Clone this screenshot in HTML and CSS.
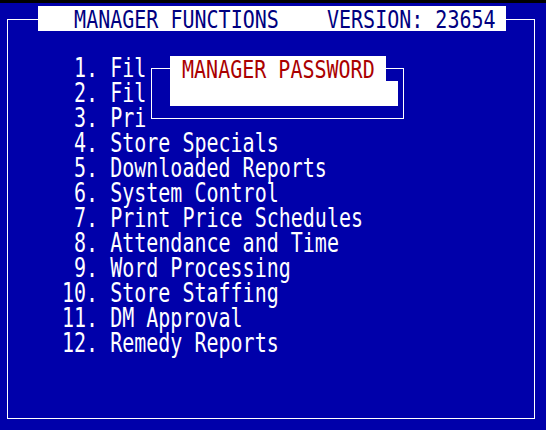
FILE: index.html
```html
<!DOCTYPE html>
<html>
<head>
<meta charset="utf-8">
<link rel="stylesheet" href="styles.css">
</head>
<body>
<div class="topbar"></div>
<div class="screen">
  <div class="frame"></div>
  <div class="title"><span class="stretch-t">   MANAGER FUNCTIONS    VERSION: 23654 </span></div>
  <div class="menu">
    <div class="line"><span class="stretch"> 1. Fil</span></div>
    <div class="line"><span class="stretch"> 2. Fil</span></div>
    <div class="line"><span class="stretch"> 3. Pri</span></div>
    <div class="line"><span class="stretch"> 4. Store Specials</span></div>
    <div class="line"><span class="stretch"> 5. Downloaded Reports</span></div>
    <div class="line"><span class="stretch"> 6. System Control</span></div>
    <div class="line"><span class="stretch"> 7. Print Price Schedules</span></div>
    <div class="line"><span class="stretch"> 8. Attendance and Time</span></div>
    <div class="line"><span class="stretch"> 9. Word Processing</span></div>
    <div class="line"><span class="stretch">10. Store Staffing</span></div>
    <div class="line"><span class="stretch">11. DM Approval</span></div>
    <div class="line"><span class="stretch">12. Remedy Reports</span></div>
  </div>
  <div class="dialog"><div class="dialog-frame"></div></div>
  <div class="pw-title"><span class="stretch-t"> MANAGER PASSWORD </span></div>
  <div class="pw-input"></div>
</div>
</body>
</html>
```

FILE: styles.css
```css
html, body {
  margin: 0;
  padding: 0;
  overflow: hidden;
  background: #0000aa;
}
body {
  width: 546px;
  height: 430px;
}
.topbar {
  height: 3px;
  background: #000;
}
.screen {
  display: grid;
  grid-template-columns: repeat(45, 12px);
  grid-template-rows: repeat(17, 25px);
  margin: 3px 0 0 2px;
  font-family: "DejaVu Sans Mono", monospace;
  font-size: 20px;
  line-height: 25px;
}
.frame {
  grid-column: 1 / 46;
  grid-row: 1 / 18;
  margin: 13px 7px 12px 5px;
  border: 1px solid #fff;
}
.title {
  grid-column: 4 / 43;
  grid-row: 1;
  background: #fff;
  color: #000080;
}
.stretch, .stretch-t {
  display: inline-block;
  vertical-align: top;
  white-space: pre;
  transform-origin: 50% 50%;
}
.stretch {
  height: 18.8px;
  line-height: 18.8px;
  margin-top: 3.1px;
  transform: scaleY(1.33);
}
.stretch-t {
  height: 20px;
  line-height: 20px;
  margin-top: 2.5px;
  transform: scaleY(1.25);
}
.menu {
  grid-column: 6 / 45;
  grid-row: 3 / 15;
  color: #fff;
}
.line {
  height: 25px;
}
.dialog {
  grid-column: 13 / 35;
  grid-row: 3 / 6;
  background: #0000aa;
  padding: 12px 6px 12px 5px;
  box-sizing: border-box;
}
.dialog-frame {
  height: 100%;
  border: 1px solid #fff;
  box-sizing: border-box;
}
.pw-title {
  grid-column: 15 / 33;
  grid-row: 3;
  background: #fff;
  color: #aa0000;
}
.pw-input {
  grid-column: 15 / 34;
  grid-row: 4;
  background: #fff;
}
```
